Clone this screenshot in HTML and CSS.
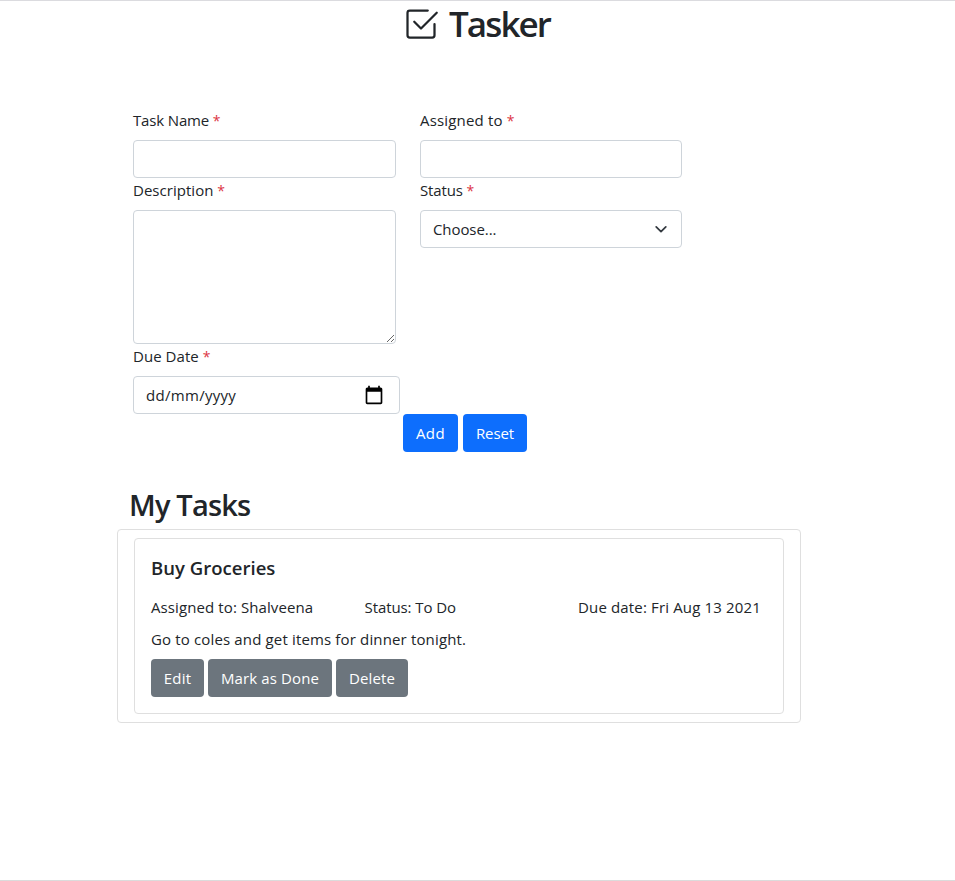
FILE: index.html
```html
<!DOCTYPE html>
<html lang="en">
<head>
<meta charset="utf-8">
<title>Tasker</title>
<link rel="stylesheet" href="styles.css">
</head>
<body>
<header class="brand">
  <svg class="brand-icon" viewBox="0 0 16 16" fill="currentColor" aria-hidden="true">
    <path d="M3 14.5A1.5 1.5 0 0 1 1.5 13V3A1.5 1.5 0 0 1 3 1.5h8a.5.5 0 0 1 0 1H3a.5.5 0 0 0-.5.5v10a.5.5 0 0 0 .5.5h10a.5.5 0 0 0 .5-.5V8a.5.5 0 0 1 1 0v5a1.5 1.5 0 0 1-1.5 1.5H3z"/>
    <path d="m8.354 10.354 7-7a.5.5 0 0 0-.708-.708L8 9.293 5.354 6.646a.5.5 0 1 0-.708.708l3 3a.5.5 0 0 0 .708 0z"/>
  </svg>
  <h1>Tasker</h1>
</header>
<main>
  <form class="task-form">
    <div class="col">
      <label class="t-name" for="name">Task Name <i>*</i></label>
      <input class="field" id="name" type="text">
      <label class="t-desc" for="desc">Description <i>*</i></label>
      <textarea class="field" id="desc"></textarea>
      <label class="t-due">Due Date <i>*</i></label>
      <div class="field date"><span class="t-date">dd/mm/yyyy</span>
        <svg class="calendar" viewBox="0 0 24 24" aria-hidden="true"><path d="M20 3h-1V1h-2v2H7V1H5v2H4c-1.100 0-2 .9-2 2v16c0 1.100.9 2 2 2h16c1.100 0 2-.9 2-2V5c0-1.100-.9-2-2-2zm0 18H4V8h16v13z"/></svg>
      </div>
    </div>
    <div class="col">
      <label class="t-who" for="who">Assigned to <i>*</i></label>
      <input class="field" id="who" type="text">
      <label class="t-status">Status <i>*</i></label>
      <div class="field select"><span class="t-choose">Choose...</span>
        <svg class="chevron" viewBox="0 0 16 16" aria-hidden="true"><path d="M2.500 5.500l5.500 5.500 5.500-5.500"/></svg>
      </div>
    </div>
  </form>
  <div class="actions">
    <button class="btn primary add">Add</button>
    <button class="btn primary reset">Reset</button>
  </div>
  <h2>My Tasks</h2>
  <section class="list">
    <article class="task">
      <h3>Buy Groceries</h3>
      <div class="meta">
        <span class="t-ass">Assigned to: Shalveena</span>
        <span class="t-todo">Status: To Do</span>
        <span class="t-dd">Due date: Fri Aug 13 2021</span>
      </div>
      <p>Go to coles and get items for dinner tonight.</p>
      <div class="task-actions">
        <button class="btn secondary edit">Edit</button>
        <button class="btn secondary done">Mark as Done</button>
        <button class="btn secondary delete">Delete</button>
      </div>
    </article>
  </section>
</main>
</body>
</html>
```
FILE: styles.css
```css
* { box-sizing: border-box; }
body {
  margin: 0;
  height: 881px;
  border-top: 1px solid #dbdbdf;
  border-bottom: 1px solid #dbdbdb;
  background: #fff;
  color: #212529;
  font: 400 15px/24px "Open Sans", "Noto Sans", sans-serif;
  letter-spacing: -.1px;
  white-space: nowrap;
  overflow: hidden;
}
h1, h2, h3, p { margin: 0; font-weight: 600; }
.brand { display: flex; align-items: center; height: 46px; padding-left: 403px; gap: 10px; }
.brand-icon { width: 36px; height: 36px; }
h1 { font-size: 35px; line-height: 46px; letter-spacing: -1.9px; }
main { width: 684px; margin: 61px 0 0 117px; }
.task-form { display: grid; grid-template-columns: 263px 262px; column-gap: 24px; padding-left: 16px; }
label { display: block; height: 24px; margin-bottom: 8px; }
i { color: #dc3545; font-style: normal; font-size: 14px; }
.t-name { letter-spacing: -.15px; }
.t-desc { letter-spacing: .03px; }
.t-due { letter-spacing: .05px; }
.t-who { letter-spacing: .17px; }
.t-status { letter-spacing: -.15px; }
.t-date { letter-spacing: .3px; }
.t-choose { letter-spacing: -.08px; }
.field {
  display: block;
  width: 100%;
  height: 38px;
  margin: 0;
  padding: 0 12px;
  border: 1px solid #ced4da;
  border-radius: 4px;
  background: #fff;
}
textarea.field { height: 134px; }
.date, .select { display: flex; align-items: center; justify-content: space-between; }
.date { width: 267px; padding-right: 15px; }
.calendar { width: 20px; height: 20px; fill: #000; }
.select { padding-right: 13px; }
.chevron { width: 14px; height: 14px; fill: none; stroke: #343a40; stroke-width: 2; stroke-linecap: round; stroke-linejoin: round; }
.actions { display: flex; gap: 5px; padding-left: 286px; }
.btn {
  height: 38px;
  padding: 0;
  border: 0;
  border-radius: 4px;
  color: #fff;
  font: inherit;
  letter-spacing: inherit;
}
.primary { background: #0d6efd; }
.secondary { background: #6c757d; }
.add { width: 55px; letter-spacing: .4px; }
.reset { width: 64px; }
.edit { width: 53px; letter-spacing: .2px; }
.done { width: 124px; letter-spacing: .13px; }
.delete { width: 72px; letter-spacing: .1px; }
h2 { margin-top: 31px; padding: 3px 0 0 12px; font-size: 29px; line-height: 38px; height: 46px; letter-spacing: -.8px; }
.list { height: 194px; padding: 8px 16px; border: 1px solid #dfdfdf; border-radius: 4px; }
.task { height: 176px; padding: 16px; border: 1px solid #dfdfdf; border-radius: 4px; }
h3 { height: 40px; font-size: 18.5px; line-height: 25px; letter-spacing: .03px; }
.meta { display: grid; grid-template-columns: repeat(3, 213.5px); height: 32px; }
.t-ass { letter-spacing: .1px; }
.t-todo { letter-spacing: -.08px; }
.t-dd { letter-spacing: .15px; }
.task p { height: 32px; font-weight: 400; letter-spacing: .15px; }
.task-actions { display: flex; gap: 4px; }
```
